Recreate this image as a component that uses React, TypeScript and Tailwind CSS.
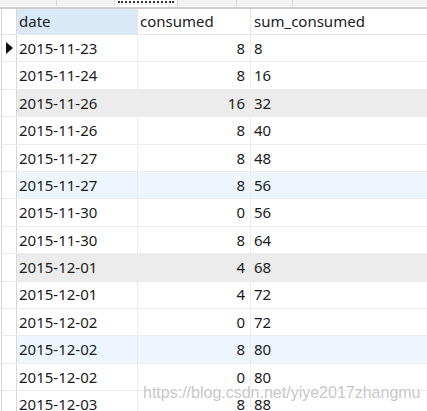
const rows: { date: string; consumed: number; sum: number; tone?: 'gray' | 'blue' }[] = [
  { date: '2015-11-23', consumed: 8, sum: 8 },
  { date: '2015-11-24', consumed: 8, sum: 16 },
  { date: '2015-11-26', consumed: 16, sum: 32, tone: 'gray' },
  { date: '2015-11-26', consumed: 8, sum: 40 },
  { date: '2015-11-27', consumed: 8, sum: 48 },
  { date: '2015-11-27', consumed: 8, sum: 56, tone: 'blue' },
  { date: '2015-11-30', consumed: 0, sum: 56 },
  { date: '2015-11-30', consumed: 8, sum: 64 },
  { date: '2015-12-01', consumed: 4, sum: 68, tone: 'gray' },
  { date: '2015-12-01', consumed: 4, sum: 72 },
  { date: '2015-12-02', consumed: 0, sum: 72 },
  { date: '2015-12-02', consumed: 8, sum: 80, tone: 'blue' },
  { date: '2015-12-02', consumed: 0, sum: 80 },
  { date: '2015-12-03', consumed: 8, sum: 88 },
];

export default function App() {
  return (
    <div
      className="relative w-[427px] h-[411px] overflow-hidden bg-white text-[15px] text-[#1b1b1b]"
      style={{ fontFamily: '"Noto Sans", "Open Sans", sans-serif' }}
    >
      {/* toolbar remnant */}
      <div className="flex h-[6px] bg-[#f2f2f2]">
        <div className="w-[57px] border-r border-[#d6d6d6]" />
        <div className="w-[58px] border-r border-[#d6d6d6]" />
        <div className="w-[63px] border-r border-[#d6d6d6] flex items-start justify-center pt-[1px] bg-[#fafafa]">
          <div className="w-[56px] h-[2px] border-t-2 border-dotted border-[#333]" />
        </div>
        <div className="w-[59px] border-r border-[#d6d6d6]" />
        <div className="w-[56px] border-r border-[#d6d6d6]" />
        <div className="flex-1" />
      </div>
      <div className="h-[1px] bg-white" />
      <div className="h-[2px] bg-[#cdcdcd]" />

      {/* header */}
      <div className="flex h-[26px] border-b border-[#e6e6e6]">
        <div className="w-[16px] border-l border-r border-[#d8d8d8] ml-[1px]" />
        <div className="w-[121px] bg-[#d9e9f8] border-r border-[#e6e6e6] px-[2px] flex items-center">date</div>
        <div className="w-[113px] border-r border-[#e6e6e6] px-[2px] flex items-center">consumed</div>
        <div className="flex-1 px-[3px] flex items-center">sum_consumed</div>
      </div>

      {rows.map((r, i) => {
        const bg = r.tone === 'gray' ? 'bg-[#ececec]' : r.tone === 'blue' ? 'bg-[#edf5fd]' : 'bg-white';
        return (
          <div key={i} className="flex h-[27.4px] border-b border-[#ececec]">
            <div className="w-[16px] ml-[1px] border-l border-r border-[#d8d8d8] bg-white flex items-center justify-center">
              {i === 0 && (
                <svg width="7" height="12" viewBox="0 0 7 12">
                  <path d="M0 0 L7 6 L0 12 Z" fill="#111" />
                </svg>
              )}
            </div>
            <div className={`w-[121px] ${bg} border-r border-[#ececec] px-[2px] flex items-center`}>{r.date}</div>
            <div className={`w-[113px] ${bg} border-r border-[#ececec] pr-[5px] flex items-center justify-end`}>{r.consumed}</div>
            <div className={`flex-1 ${bg} px-[3px] flex items-center`}>{r.sum}</div>
          </div>
        );
      })}

      {/* watermark */}
      <div
        className="absolute left-[143px] top-[381px] text-[16px] text-[#c8c8c8] whitespace-nowrap"
        style={{ fontFamily: '"Liberation Sans", Arial, sans-serif', textShadow: '0 0 2px #fff, 0 0 2px #fff' }}
      >
        https://blog.csdn.net/yiye2017zhangmu
      </div>
    </div>
  );
}
